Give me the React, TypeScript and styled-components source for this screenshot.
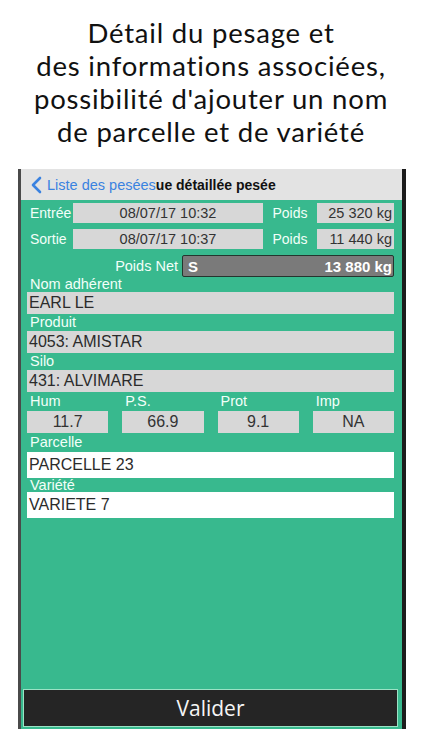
import React from "react";
import styled, { createGlobalStyle } from "styled-components";

const GlobalStyle = createGlobalStyle`
  html, body {
    margin: 0;
    padding: 0;
    background: #ffffff;
  }
`;

const Page = styled.div`
  width: 422px;
  height: 750px;
  background: #ffffff;
  display: flex;
  flex-direction: column;
  align-items: flex-start;
  overflow: hidden;
`;

const Caption = styled.h1`
  width: 100%;
  margin: 0;
  padding-top: 16px;
  font-family: Lato, "Open Sans", sans-serif;
  font-weight: 400;
  font-size: 27.5px;
  letter-spacing: 0.8px;
  line-height: 33px;
  text-align: center;
  color: #111;
`;

const Phone = styled.div`
  margin: 21px 0 0 18px;
  width: 381px;
  height: 560px;
  border-left: 3px solid #4a4a4a;
  border-right: 4px solid #1c1c1c;
  display: flex;
  flex-direction: column;
  font-family: "Liberation Sans", Arial, sans-serif;
`;

const NavBar = styled.div`
  height: 31px;
  background: #e3e3e3;
  display: flex;
  align-items: center;
  padding-left: 10px;
  font-size: 14.5px;
`;

const BackLink = styled.span`
  display: flex;
  align-items: center;
  gap: 5px;
  color: #3a82e0;
`;

const NavTitle = styled.span`
  font-weight: 700;
  font-size: 14px;
  color: #111;
`;

const Body = styled.div`
  flex: 1;
  background: #38b98e;
  display: flex;
  flex-direction: column;
  padding: 3px 8px 0 6px;
`;

const WeighRow = styled.div`
  display: grid;
  grid-template-columns: 46px 190px 54px 77px;
  align-items: center;
  height: 20px;
  margin-bottom: 6px;
  font-size: 14px;
`;

const RowLabel = styled.span<{ $center?: boolean }>`
  color: #f2fff9;
  padding-left: ${(p) => (p.$center ? "0" : "3px")};
  text-align: ${(p) => (p.$center ? "center" : "left")};
  white-space: nowrap;
`;

const GreyBox = styled.div<{ $align?: string }>`
  height: 20px;
  background: #d7d7d7;
  color: #333;
  display: flex;
  align-items: center;
  justify-content: ${(p) => p.$align || "center"};
  padding: 0 2px;
  font-size: 14.5px;
  white-space: nowrap;
`;

const NetRow = styled.div`
  display: flex;
  align-items: center;
  gap: 4px;
  height: 22px;
  font-size: 14.5px;
`;

const NetLabel = styled.span`
  width: 151px;
  text-align: right;
  color: #f2fff9;
`;

const NetBox = styled.div`
  flex: 1;
  height: 20px;
  background: #7a7a7a;
  border: 1px solid #24352e;
  border-radius: 2px;
  display: flex;
  align-items: center;
  justify-content: space-between;
  padding: 0 1px 0 5px;
  color: #fff;
  font-weight: 700;
  font-size: 15px;
`;

const FieldLabel = styled.div<{ $h?: number }>`
  height: ${(p) => p.$h || 17}px;
  line-height: ${(p) => p.$h || 17}px;
  font-size: 14.5px;
  color: #f2fff9;
  padding-left: 3px;
`;

const FieldBox = styled.div<{ $white?: boolean }>`
  height: ${(p) => (p.$white ? 26 : 22)}px;
  background: ${(p) => (p.$white ? "#ffffff" : "#d7d7d7")};
  color: #2b2b2b;
  display: flex;
  align-items: center;
  padding-left: 2px;
  font-size: 16px;
`;

const Metrics = styled.div`
  display: grid;
  grid-template-columns: repeat(4, 1fr);
  column-gap: 14px;
`;

const Metric = styled.div`
  display: flex;
  flex-direction: column;
`;

const MetricBox = styled.div`
  height: 22px;
  background: #d7d7d7;
  color: #333;
  display: flex;
  align-items: center;
  justify-content: center;
  font-size: 16px;
`;

const Spacer = styled.div`
  flex: 1;
`;

const SubmitButton = styled.button`
  margin: 0 -4px 2px -4px;
  height: 38px;
  background: #252525;
  border: 1px solid #9be2c5;
  color: #f5f5f5;
  font-family: "Open Sans", Lato, sans-serif;
  font-size: 21px;
  cursor: pointer;
`;

const metrics = [
  { label: "Hum", value: "11.7" },
  { label: "P.S.", value: "66.9" },
  { label: "Prot", value: "9.1" },
  { label: "Imp", value: "NA" },
];

export default function App() {
  return (
    <Page>
      <GlobalStyle />
      <Caption>
        Détail du pesage et
        <br />
        des informations associées,
        <br />
        possibilité d'ajouter un nom
        <br />
        de parcelle et de variété
      </Caption>
      <Phone>
        <NavBar>
          <BackLink>
            <svg width="11" height="18" viewBox="0 0 11 18">
              <path d="M9 2 L2 9 L9 16" fill="none" stroke="#3a82e0" strokeWidth="2.6" strokeLinecap="round" strokeLinejoin="round" />
            </svg>
            Liste des pesées
          </BackLink>
          <NavTitle>ue détaillée pesée</NavTitle>
        </NavBar>
        <Body>
          <WeighRow>
            <RowLabel>Entrée</RowLabel>
            <GreyBox>08/07/17 10:32</GreyBox>
            <RowLabel $center>Poids</RowLabel>
            <GreyBox $align="flex-end">25 320 kg</GreyBox>
          </WeighRow>
          <WeighRow>
            <RowLabel>Sortie</RowLabel>
            <GreyBox>08/07/17 10:37</GreyBox>
            <RowLabel $center>Poids</RowLabel>
            <GreyBox $align="flex-end">11 440 kg</GreyBox>
          </WeighRow>
          <NetRow>
            <NetLabel>Poids Net</NetLabel>
            <NetBox>
              <span>S</span>
              <span>13 880 kg</span>
            </NetBox>
          </NetRow>
          <FieldLabel $h={15}>Nom adhérent</FieldLabel>
          <FieldBox>EARL LE</FieldBox>
          <FieldLabel>Produit</FieldLabel>
          <FieldBox>4053: AMISTAR</FieldBox>
          <FieldLabel>Silo</FieldLabel>
          <FieldBox>431: ALVIMARE</FieldBox>
          <Metrics>
            {metrics.map((m) => (
              <Metric key={m.label}>
                <FieldLabel $h={19}>{m.label}</FieldLabel>
                <MetricBox>{m.value}</MetricBox>
              </Metric>
            ))}
          </Metrics>
          <FieldLabel $h={19}>Parcelle</FieldLabel>
          <FieldBox $white>PARCELLE 23</FieldBox>
          <FieldLabel $h={14}>Variété</FieldLabel>
          <FieldBox $white>VARIETE 7</FieldBox>
          <Spacer />
          <SubmitButton>Valider</SubmitButton>
        </Body>
      </Phone>
    </Page>
  );
}
